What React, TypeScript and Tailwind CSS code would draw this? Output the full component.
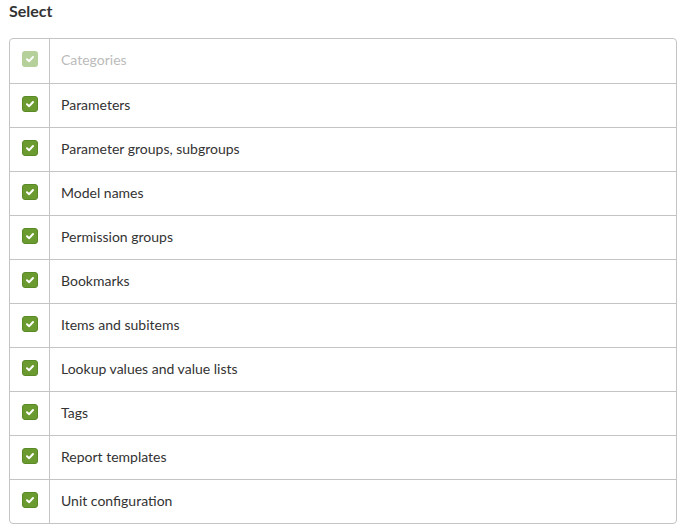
const ITEMS = [
  { label: 'Categories', disabled: true },
  { label: 'Parameters' },
  { label: 'Parameter groups, subgroups' },
  { label: 'Model names' },
  { label: 'Permission groups' },
  { label: 'Bookmarks' },
  { label: 'Items and subitems' },
  { label: 'Lookup values and value lists' },
  { label: 'Tags' },
  { label: 'Report templates' },
  { label: 'Unit configuration' },
]

function Check({ disabled }: { disabled?: boolean }) {
  return (
    <span
      className={
        disabled
          ? 'flex h-4 w-4 items-center justify-center rounded-[3px] bg-[#b5d09a]'
          : 'flex h-4 w-4 items-center justify-center rounded-[3px] bg-[#6b9b30] border border-[#5a8a26]'
      }
    >
      <svg width="10" height="10" viewBox="0 0 10 10">
        <path d="M2 5.2 L4.2 7.2 L8 3" fill="none" stroke="white" strokeWidth="2" strokeLinecap="round" strokeLinejoin="round" />
      </svg>
    </span>
  )
}

export default function App() {
  return (
    <div className="w-[683px] h-[532px] bg-white px-[9px] pt-[1px] text-[#333]" style={{ fontFamily: 'Lato, "Open Sans", sans-serif' }}>
      <h2 className="text-[16px] font-bold leading-[20px] mb-[17px]">Select</h2>
      <div className="w-[668px] border border-[#c4c4c4] rounded-[4px]">
        {ITEMS.map((item, i) => (
          <div key={item.label} className={i === 0 ? 'flex h-[44px]' : 'flex h-[44px] border-t border-[#c4c4c4]'}>
            <div className="w-[40px] border-r border-[#c4c4c4] flex justify-center pt-[12px] pl-[1px]">
              <Check disabled={item.disabled} />
            </div>
            <div className={item.disabled ? 'flex-1 pl-[11px] pt-[11px] text-[14px] leading-[20px] text-[#bbb]' : 'flex-1 pl-[11px] pt-[11px] text-[14px] leading-[20px] text-[#333]'}>
              {item.label}
            </div>
          </div>
        ))}
      </div>
    </div>
  )
}
